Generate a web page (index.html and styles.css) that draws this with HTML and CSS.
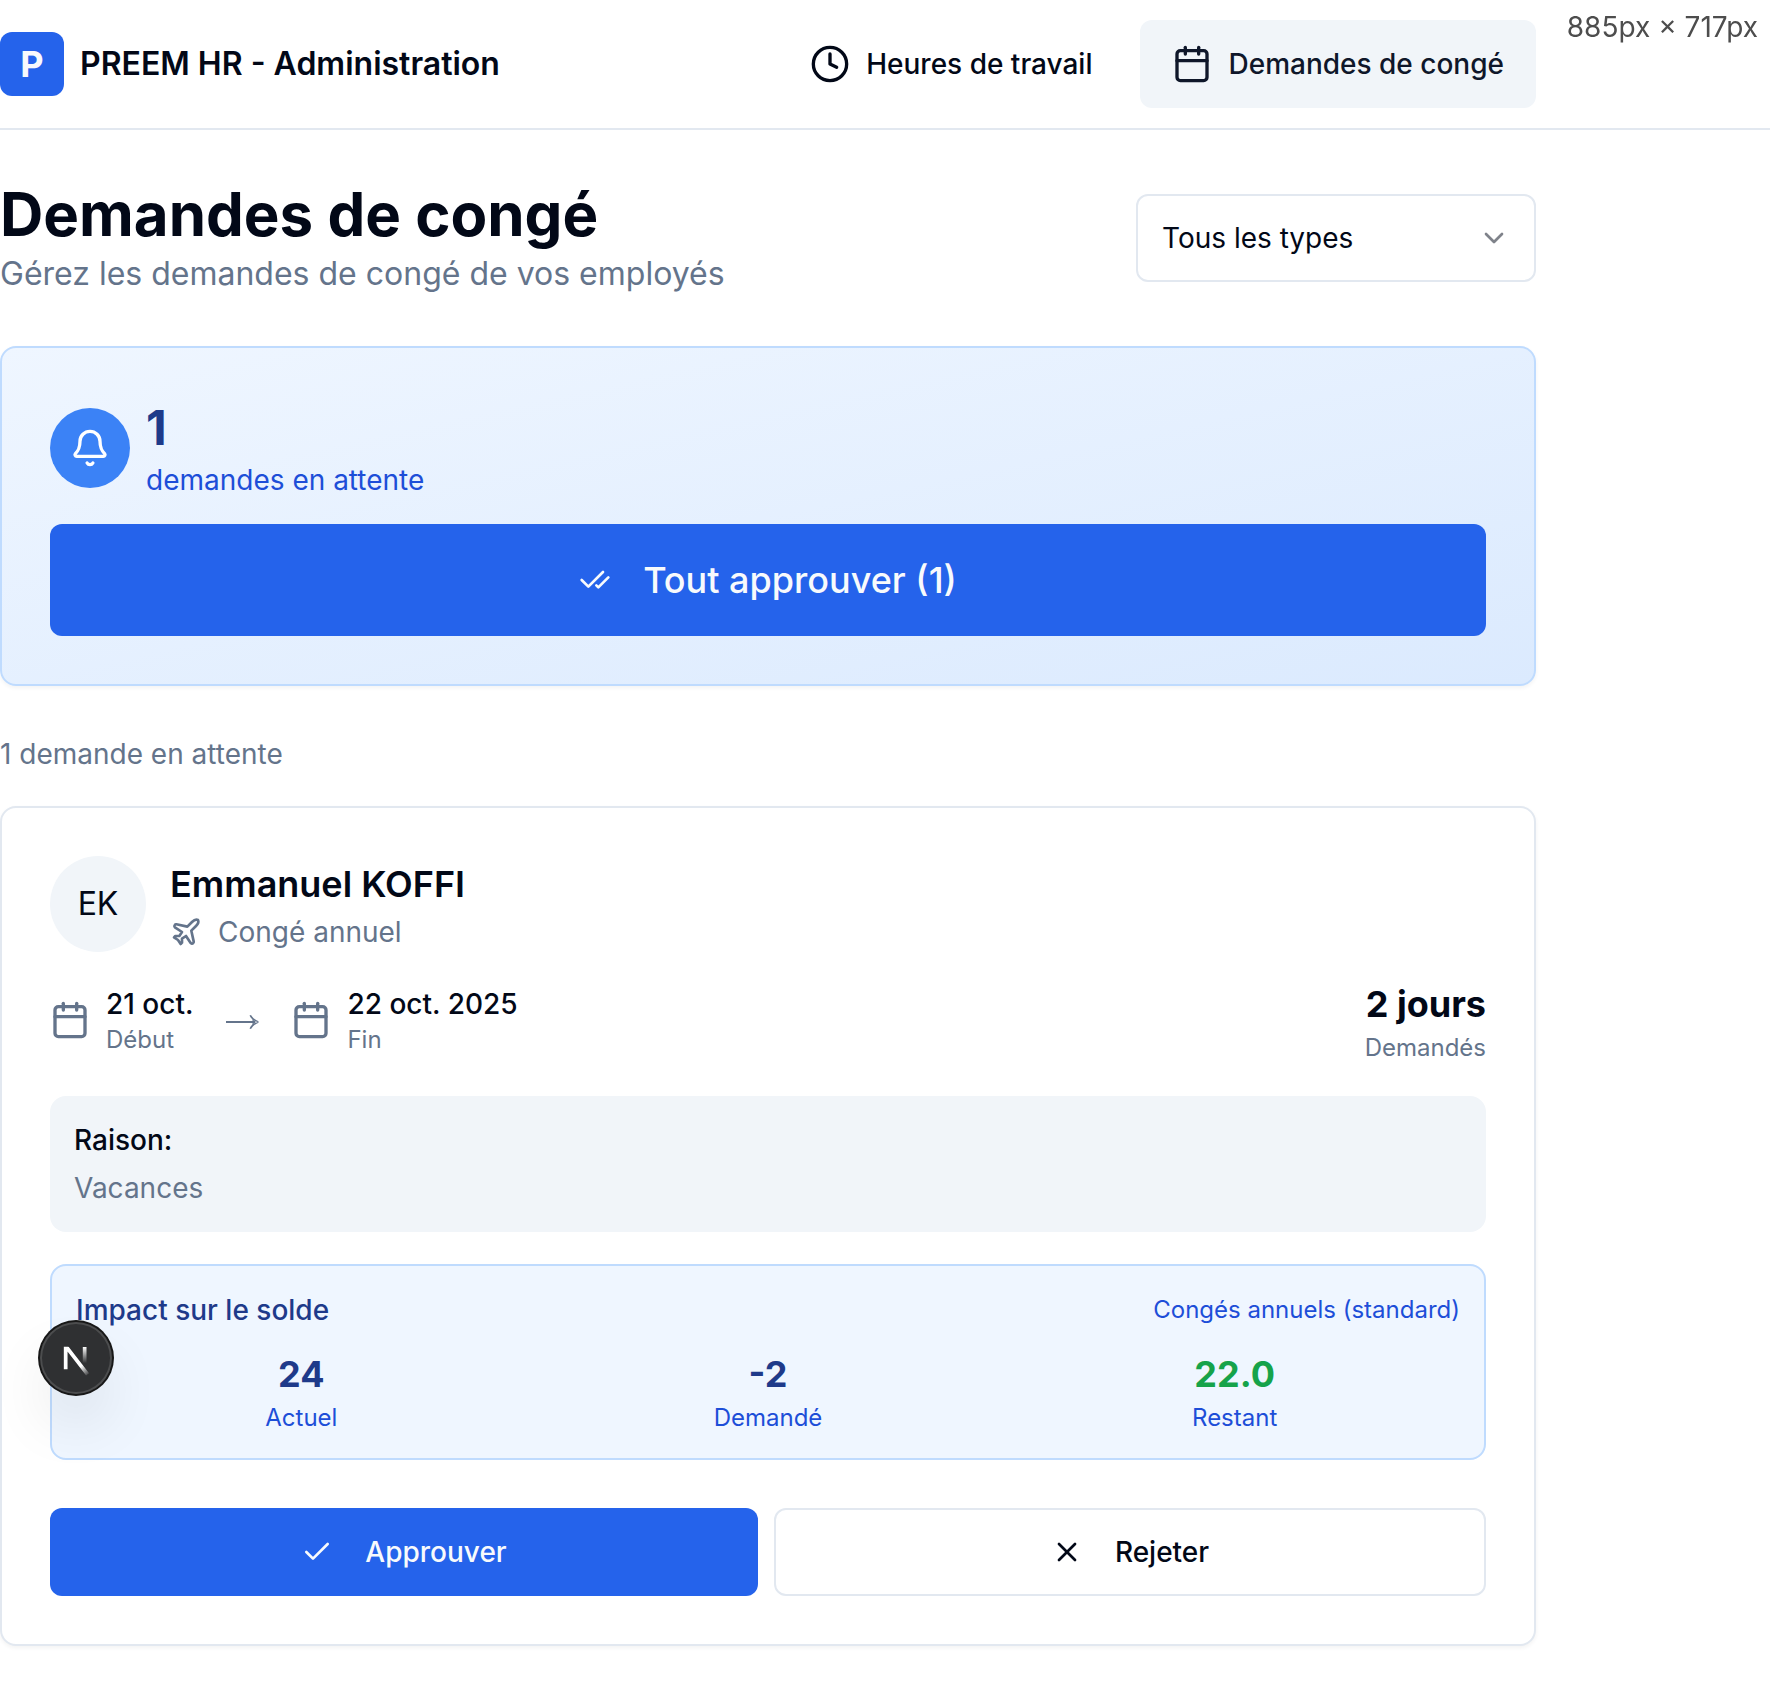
FILE: index.html
```
<!DOCTYPE html>
<html lang="fr">
<head>
<meta charset="utf-8">
<meta name="viewport" content="width=device-width, initial-scale=1">
<title>PREEM HR - Administration</title>
<link rel="stylesheet" href="styles.css">
</head>
<body>
<svg class="sprite" aria-hidden="true">
  <symbol id="calendar" viewBox="0 0 24 24"><path d="M8 2v4"/><path d="M16 2v4"/><rect width="18" height="18" x="3" y="4" rx="2"/><path d="M3 10h18"/></symbol>
  <symbol id="clock" viewBox="0 0 24 24"><circle cx="12" cy="12" r="10"/><path d="M12 6v6l4 2"/></symbol>
  <symbol id="chevron" viewBox="0 0 24 24"><path d="m6 9 6 6 6-6"/></symbol>
  <symbol id="bell" viewBox="0 0 24 24"><path d="M10.268 21a2 2 0 0 0 3.464 0"/><path d="M3.262 15.326A1 1 0 0 0 4 17h16a1 1 0 0 0 .74-1.673C19.41 13.956 18 12.499 18 8A6 6 0 0 0 6 8c0 4.499-1.411 5.956-2.738 7.326"/></symbol>
  <symbol id="check-check" viewBox="0 0 24 24"><path d="M18 6 7 17l-5-5"/><path d="m22 10-7.5 7.5L13 16"/></symbol>
  <symbol id="plane" viewBox="0 0 24 24"><path d="M17.8 19.2 16 11l3.5-3.5C21 6 21.5 4 21 3c-1-.5-3 0-4.500 1.500L13 8 4.800 6.200c-.5-.1-.9.1-1.100.5l-.3.5c-.2.5-.1 1 .3 1.300L9 12l-2 3H4l-1 1 3 2 2 3 1-1v-3l3-2 3.500 5.300c.3.4.8.5 1.300.3l.5-.2c.4-.3.6-.7.5-1.200z"/></symbol>
  <symbol id="check" viewBox="0 0 24 24"><path d="M20 6 9 17l-5-5"/></symbol>
  <symbol id="x" viewBox="0 0 24 24"><path d="M18 6 6 18"/><path d="m6 6 12 12"/></symbol>
</svg>

<header class="topbar">
  <div class="topbar-inner">
    <div class="brand">
      <span class="brand-mark">P</span>
      <span class="brand-name">PREEM HR - Administration</span>
    </div>
    <nav class="nav">
      <a class="nav-link" href="#heures"><svg class="icon icon-lg"><use href="#clock"/></svg>Heures de travail</a>
      <a class="nav-link is-active" href="#conges" aria-current="page"><svg class="icon icon-lg"><use href="#calendar"/></svg>Demandes de congé</a>
    </nav>
  </div>
</header>

<main class="page">
  <div class="page-head">
    <div>
      <h1 class="page-title">Demandes de congé</h1>
      <p class="page-subtitle">Gérez les demandes de congé de vos employés</p>
    </div>
    <div class="select">
      <select class="select-input" aria-label="Type de congé">
        <option>Tous les types</option>
      </select>
      <svg class="icon select-chevron" aria-hidden="true"><use href="#chevron"/></svg>
    </div>
  </div>

  <section class="card summary">
    <div class="summary-head">
      <span class="summary-badge"><svg class="icon icon-lg"><use href="#bell"/></svg></span>
      <div>
        <p class="summary-count">1</p>
        <p class="summary-label">demandes en attente</p>
      </div>
    </div>
    <button class="btn btn-primary btn-large" type="button"><svg class="icon"><use href="#check-check"/></svg>Tout approuver (1)</button>
  </section>

  <section class="requests">
    <p class="requests-count">1 demande en attente</p>
    <article class="card request">
      <div class="person">
        <span class="avatar">EK</span>
        <div>
          <h2 class="person-name">Emmanuel KOFFI</h2>
          <p class="leave-type"><svg class="icon"><use href="#plane"/></svg>Congé annuel</p>
        </div>
      </div>

      <div class="period">
        <div class="dates">
          <div class="date">
            <svg class="icon icon-lg"><use href="#calendar"/></svg>
            <div>
              <p class="date-value">21 oct.</p>
              <p class="caption">Début</p>
            </div>
          </div>
          <svg class="arrow" viewBox="0 0 34 40" fill="none" role="img" aria-label="jusqu'au"><path d="M1 22h29" stroke="currentColor" stroke-width="2"/><path d="M24.500 15.500c1.500 3.500 4.500 5.500 8.500 6.500-4 1-7 3-8.500 6.500l1.500.5c1.500-2.500 4-5 7.500-6.300v-1.400c-3.500-1.300-6-3.800-7.500-6.300z" fill="currentColor"/><path d="m27 19 4 3-4 3 1-3z" fill="currentColor"/></svg>
          <div class="date">
            <svg class="icon icon-lg"><use href="#calendar"/></svg>
            <div>
              <p class="date-value">22 oct. 2025</p>
              <p class="caption">Fin</p>
            </div>
          </div>
        </div>
        <div class="duration">
          <p class="figure">2 jours</p>
          <p class="caption">Demandés</p>
        </div>
      </div>

      <div class="reason">
        <p class="reason-label">Raison:</p>
        <p class="reason-text">Vacances</p>
      </div>

      <div class="balance">
        <div class="balance-head">
          <p class="balance-title">Impact sur le solde</p>
          <p class="balance-caption">Congés annuels (standard)</p>
        </div>
        <div class="balance-grid">
          <div><p class="figure">24</p><p class="balance-caption">Actuel</p></div>
          <div><p class="figure">-2</p><p class="balance-caption">Demandé</p></div>
          <div><p class="figure is-positive">22.0</p><p class="balance-caption">Restant</p></div>
        </div>
      </div>

      <div class="actions">
        <button class="btn btn-primary" type="button"><svg class="icon"><use href="#check"/></svg>Approuver</button>
        <button class="btn btn-outline" type="button"><svg class="icon"><use href="#x"/></svg>Rejeter</button>
      </div>
    </article>
  </section>
</main>

<div class="viewport-size">885px × 717px</div>

<button class="dev-badge" type="button" aria-label="Next.js">
  <svg class="dev-mark" viewBox="0 0 36 36" fill="none">
    <defs>
      <linearGradient id="mark-diagonal" x1="9.95" y1="11.12" x2="15.47" y2="17.96" gradientUnits="userSpaceOnUse"><stop stop-color="#fff"/><stop offset=".7" stop-color="#fff" stop-opacity="0"/></linearGradient>
      <linearGradient id="mark-bar" x1="11.82" y1="1.4" x2="11.79" y2="9.62" gradientUnits="userSpaceOnUse"><stop stop-color="#fff"/><stop offset="1" stop-color="#fff" stop-opacity="0"/></linearGradient>
      <clipPath id="mark-clip"><rect x="0" y="1.4" width="16" height="15"/></clipPath>
    </defs>
    <g transform="translate(10.5 11)" stroke-width="1.86">
      <path d="M13.3 15.2 2.34 1v11.6" stroke="url(#mark-diagonal)" clip-path="url(#mark-clip)"/>
      <path d="M11.825 1.5v11.6" stroke="url(#mark-bar)"/>
    </g>
  </svg>
</button>
</body>
</html>
```
FILE: styles.css
```
:root {
  --ink: #020817;
  --muted: #64748b;
  --line: #e2e8f0;
  --surface: #f1f5f9;
  --primary: #2563eb;
  --blue-50: #eff6ff;
  --blue-200: #bfdbfe;
  --blue-700: #1d4ed8;
  --blue-900: #1e3a8a;
}

*, *::before, *::after { box-sizing: border-box; }

body {
  margin: 0;
  background: #fff;
  color: var(--ink);
  font-family: Inter, "Liberation Sans", sans-serif;
  font-size: 28px;
  line-height: 40px;
  -webkit-font-smoothing: antialiased;
}

h1, h2, p { margin: 0; }

.sprite { display: none; }

.icon {
  flex: none;
  width: 32px;
  height: 32px;
  fill: none;
  stroke: currentColor;
  stroke-width: 2;
  stroke-linecap: round;
  stroke-linejoin: round;
}

.icon-lg { width: 40px; height: 40px; }

/* Top bar */

.topbar { border-bottom: 2px solid var(--line); }

.topbar-inner {
  display: flex;
  align-items: center;
  justify-content: space-between;
  max-width: 1536px;
  min-height: 128px;
}

.brand { display: flex; align-items: center; gap: 16px; }

.brand-mark {
  display: grid;
  place-items: center;
  width: 64px;
  height: 64px;
  border-radius: 12px;
  background: var(--primary);
  color: #f8fafc;
  font-size: 36px;
  font-weight: 700;
}

.brand-name { font-size: 32px; font-weight: 600; line-height: 48px; }

.nav { display: flex; gap: 16px; }

.nav-link {
  display: flex;
  align-items: center;
  gap: 16px;
  min-height: 88px;
  padding: 0 32px;
  border-radius: 12px;
  color: inherit;
  font-weight: 500;
  text-decoration: none;
}

.nav-link.is-active { background: var(--surface); color: #0f172a; }

/* Page */

.page {
  display: flex;
  flex-direction: column;
  gap: 48px;
  max-width: 1536px;
  padding: 48px 0;
}

.page-head { display: flex; align-items: center; justify-content: space-between; }

.page-title { font-size: 60px; font-weight: 700; line-height: 72px; }

.page-subtitle { color: var(--muted); font-size: 32px; line-height: 48px; }

.select { position: relative; width: 400px; }

.select-input {
  appearance: none;
  width: 100%;
  height: 88px;
  padding: 0 24px;
  border: 2px solid var(--line);
  border-radius: 12px;
  background: #fff;
  color: inherit;
  font: inherit;
}

.select-chevron {
  position: absolute;
  top: 28px;
  right: 26px;
  opacity: .5;
  pointer-events: none;
}

.card {
  padding: 48px;
  border: 2px solid var(--line);
  border-radius: 16px;
  background: #fff;
  box-shadow: 0 2px 4px rgba(0, 0, 0, .05);
}

.btn {
  display: flex;
  align-items: center;
  justify-content: center;
  gap: 32px;
  min-height: 88px;
  padding: 0 32px;
  border: 0;
  border-radius: 12px;
  font: inherit;
  font-weight: 500;
}

.btn-primary { background: var(--primary); color: #f8fafc; }

.btn-outline { border: 2px solid var(--line); background: #fff; color: var(--ink); }

.btn-large { min-height: 112px; font-size: 36px; }

/* Pending summary */

.summary {
  display: flex;
  flex-direction: column;
  gap: 24px;
  border-color: var(--blue-200);
  background: linear-gradient(to bottom right, var(--blue-50), #dbeafe);
}

.summary-head { display: flex; align-items: center; gap: 16px; }

.summary-badge {
  display: grid;
  place-items: center;
  width: 80px;
  height: 80px;
  border-radius: 50%;
  background: #3b82f6;
  color: #fff;
}

.summary-count { color: var(--blue-900); font-size: 48px; font-weight: 700; line-height: 64px; }

.summary-label { color: var(--blue-700); }

/* Requests */

.requests { display: flex; flex-direction: column; gap: 32px; }

.requests-count { color: var(--muted); }

.request { display: flex; flex-direction: column; }

.person { display: flex; align-items: center; gap: 24px; }

.avatar {
  display: grid;
  place-items: center;
  width: 96px;
  height: 96px;
  border-radius: 50%;
  background: var(--surface);
  font-size: 32px;
}

.person-name { font-size: 36px; font-weight: 600; line-height: 56px; }

.leave-type { display: flex; align-items: center; gap: 16px; color: var(--muted); }

.period {
  display: flex;
  align-items: center;
  justify-content: space-between;
  margin-top: 24px;
}

.dates { display: flex; align-items: center; gap: 32px; }

.date { display: flex; align-items: center; gap: 16px; }

.date .icon, .arrow { color: var(--muted); }

.arrow { flex: none; width: 34px; height: 40px; }

.date-value { font-weight: 500; }

.caption { color: var(--muted); font-size: 24px; line-height: 32px; }

.duration { text-align: right; }

.figure { font-size: 36px; font-weight: 700; line-height: 56px; }

.reason {
  display: flex;
  flex-direction: column;
  gap: 8px;
  margin-top: 32px;
  padding: 24px;
  border-radius: 16px;
  background: var(--surface);
}

.reason-label { font-weight: 500; }

.reason-text { color: var(--muted); }

.balance {
  display: flex;
  flex-direction: column;
  gap: 16px;
  margin-top: 32px;
  padding: 24px;
  border: 2px solid var(--blue-200);
  border-radius: 16px;
  background: var(--blue-50);
  color: var(--blue-900);
}

.balance-head { display: flex; align-items: center; justify-content: space-between; }

.balance-title { font-weight: 500; }

.balance-caption { color: var(--blue-700); font-size: 24px; line-height: 32px; }

.balance-grid {
  display: grid;
  grid-template-columns: repeat(3, 1fr);
  gap: 16px;
  text-align: center;
}

.is-positive { color: #16a34a; }

.actions { display: flex; gap: 16px; margin-top: 48px; }

.actions .btn { flex: 1; }

/* Overlays */

.viewport-size {
  position: fixed;
  top: 7px;
  right: 12px;
  color: #4d4d4d;
}

.dev-badge {
  position: fixed;
  bottom: 300px;
  left: 40px;
  width: 72px;
  height: 72px;
  padding: 0;
  border: 0;
  border-radius: 50%;
  background: #2f3032;
  box-shadow: 0 0 0 2px #171717, inset 0 0 0 2px rgba(255, 255, 255, .14), 0 32px 64px -16px rgba(0, 0, 0, .24);
}

.dev-mark { display: block; width: 72px; height: 72px; }
```
